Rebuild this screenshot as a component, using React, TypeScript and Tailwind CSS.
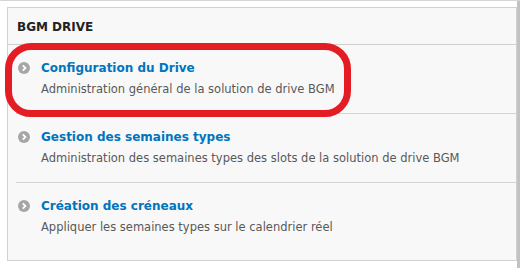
import React from 'react';

const items = [
  { title: 'Configuration du Drive', desc: 'Administration général de la solution de drive BGM' },
  { title: 'Gestion des semaines types', desc: 'Administration des semaines types des slots de la solution de drive BGM' },
  { title: 'Création des créneaux', desc: 'Appliquer les semaines types sur le calendrier réel' },
];

function Bullet() {
  return (
    <svg width="12" height="12" viewBox="0 0 12 12" className="shrink-0">
      <circle cx="6" cy="6" r="6" fill="#a6a6a6" />
      <path d="M4.8 3.4 L7.4 6 L4.8 8.6" fill="none" stroke="#fff" strokeWidth="1.8" />
    </svg>
  );
}

export default function App() {
  return (
    <div className="relative flex w-[520px] h-[268px] bg-white border-t border-[#d6d6d6] font-['DejaVu_Sans',sans-serif]">
      <div className="flex-1">
        {/* admin block */}
        <div className="ml-[7px] mt-[6px] h-[254px] border border-[#d2d2d2] bg-[#f8f8f8]">
          <div className="h-[37px] border-b border-[#cfcfcf] pl-[9px] pt-[13px]">
            <h3 className="text-[12px] font-bold leading-none text-[#222]">BGM DRIVE</h3>
          </div>
          <ul className="ml-[8px]">
            {items.map((item, i) => (
              <li key={i} className={`h-[69px] pt-[15px] ${i < items.length - 1 ? 'border-b border-[#d4d4d4]' : ''}`}>
                <div className="flex items-center gap-[11px] pl-[2px]">
                  <Bullet />
                  <a href="#" className="text-[12px] font-bold leading-[16px] text-[#0074bd]">{item.title}</a>
                </div>
                <p className="mt-[6px] pl-[25px] text-[11.5px] leading-[14px] text-[#595959]">{item.desc}</p>
              </li>
            ))}
          </ul>
        </div>
      </div>
      <div className="w-[3px] bg-[#c2c2c2]" />

      {/* red highlight annotation */}
      <div className="absolute left-[5px] top-[42px] w-[346px] h-[74px] rounded-[26px] border-[7px] border-[#e41d25]" />
    </div>
  );
}
